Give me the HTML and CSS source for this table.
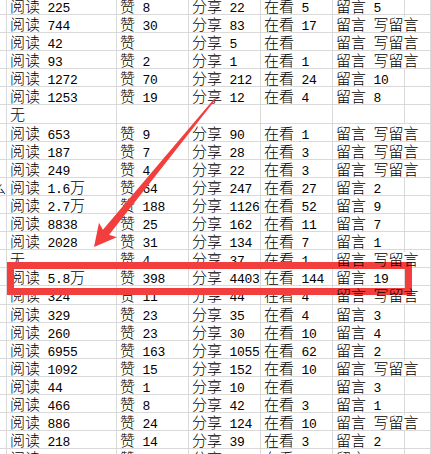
FILE: index.html
```html
<!DOCTYPE html>
<html lang="zh-CN">
<head>
<meta charset="utf-8">
<title>阅读数据</title>
<link rel="stylesheet" href="styles.css">
</head>
<body>
<div class="page">
  <div class="sheet">
    <div class="row"><div class="c a"></div><div class="c">阅读<span class="n"> 225</span></div><div class="c">赞<span class="n"> 8</span></div><div class="c">分享<span class="n"> 22</span></div><div class="c">在看<span class="n"> 5</span></div><div class="c">留言<span class="n"> 5</span></div><div class="c"></div></div>
    <div class="row"><div class="c a"></div><div class="c">阅读<span class="n"> 744</span></div><div class="c">赞<span class="n"> 30</span></div><div class="c">分享<span class="n"> 83</span></div><div class="c">在看<span class="n"> 17</span></div><div class="c ov">留言<span class="n"> </span>写留言</div><div class="c"></div></div>
    <div class="row"><div class="c a"></div><div class="c">阅读<span class="n"> 42</span></div><div class="c">赞</div><div class="c">分享<span class="n"> 5</span></div><div class="c">在看</div><div class="c ov">留言<span class="n"> </span>写留言</div><div class="c"></div></div>
    <div class="row"><div class="c a"></div><div class="c">阅读<span class="n"> 93</span></div><div class="c">赞<span class="n"> 2</span></div><div class="c">分享<span class="n"> 1</span></div><div class="c">在看<span class="n"> 1</span></div><div class="c ov">留言<span class="n"> </span>写留言</div><div class="c"></div></div>
    <div class="row"><div class="c a"></div><div class="c">阅读<span class="n"> 1272</span></div><div class="c">赞<span class="n"> 70</span></div><div class="c">分享<span class="n"> 212</span></div><div class="c">在看<span class="n"> 24</span></div><div class="c">留言<span class="n"> 10</span></div><div class="c"></div></div>
    <div class="row"><div class="c a"></div><div class="c">阅读<span class="n"> 1253</span></div><div class="c">赞<span class="n"> 19</span></div><div class="c">分享<span class="n"> 12</span></div><div class="c">在看<span class="n"> 4</span></div><div class="c">留言<span class="n"> 8</span></div><div class="c"></div></div>
    <div class="row"><div class="c a"></div><div class="c">无</div><div class="c"></div><div class="c"></div><div class="c"></div><div class="c"></div><div class="c"></div></div>
    <div class="row"><div class="c a"></div><div class="c">阅读<span class="n"> 653</span></div><div class="c">赞<span class="n"> 9</span></div><div class="c">分享<span class="n"> 90</span></div><div class="c">在看<span class="n"> 1</span></div><div class="c ov">留言<span class="n"> </span>写留言</div><div class="c"></div></div>
    <div class="row"><div class="c a"></div><div class="c">阅读<span class="n"> 187</span></div><div class="c">赞<span class="n"> 7</span></div><div class="c">分享<span class="n"> 28</span></div><div class="c">在看<span class="n"> 3</span></div><div class="c ov">留言<span class="n"> </span>写留言</div><div class="c"></div></div>
    <div class="row"><div class="c a"></div><div class="c">阅读<span class="n"> 249</span></div><div class="c">赞<span class="n"> 4</span></div><div class="c">分享<span class="n"> 22</span></div><div class="c">在看<span class="n"> 3</span></div><div class="c ov">留言<span class="n"> </span>写留言</div><div class="c"></div></div>
    <div class="row"><div class="c a"><span>么</span></div><div class="c">阅读<span class="n"> 1.6</span>万</div><div class="c">赞<span class="n"> 64</span></div><div class="c">分享<span class="n"> 247</span></div><div class="c">在看<span class="n"> 27</span></div><div class="c">留言<span class="n"> 2</span></div><div class="c"></div></div>
    <div class="row"><div class="c a"></div><div class="c">阅读<span class="n"> 2.7</span>万</div><div class="c">赞<span class="n"> 188</span></div><div class="c">分享<span class="n"> 1126</span></div><div class="c">在看<span class="n"> 52</span></div><div class="c">留言<span class="n"> 9</span></div><div class="c"></div></div>
    <div class="row"><div class="c a"></div><div class="c">阅读<span class="n"> 8838</span></div><div class="c">赞<span class="n"> 25</span></div><div class="c">分享<span class="n"> 162</span></div><div class="c">在看<span class="n"> 11</span></div><div class="c">留言<span class="n"> 7</span></div><div class="c"></div></div>
    <div class="row"><div class="c a"></div><div class="c">阅读<span class="n"> 2028</span></div><div class="c">赞<span class="n"> 31</span></div><div class="c">分享<span class="n"> 134</span></div><div class="c">在看<span class="n"> 7</span></div><div class="c">留言<span class="n"> 1</span></div><div class="c"></div></div>
    <div class="row"><div class="c a"></div><div class="c">无</div><div class="c">赞<span class="n"> 4</span></div><div class="c">分享<span class="n"> 37</span></div><div class="c">在看<span class="n"> 1</span></div><div class="c ov">留言<span class="n"> </span>写留言</div><div class="c"></div></div>
    <div class="row"><div class="c a"></div><div class="c">阅读<span class="n"> 5.8</span>万</div><div class="c">赞<span class="n"> 398</span></div><div class="c">分享<span class="n"> 4403</span></div><div class="c">在看<span class="n"> 144</span></div><div class="c">留言<span class="n"> 19</span></div><div class="c"></div></div>
    <div class="row"><div class="c a"></div><div class="c">阅读<span class="n"> 324</span></div><div class="c">赞<span class="n"> 11</span></div><div class="c">分享<span class="n"> 44</span></div><div class="c">在看<span class="n"> 4</span></div><div class="c ov">留言<span class="n"> </span>写留言</div><div class="c"></div></div>
    <div class="row"><div class="c a"></div><div class="c">阅读<span class="n"> 329</span></div><div class="c">赞<span class="n"> 23</span></div><div class="c">分享<span class="n"> 35</span></div><div class="c">在看<span class="n"> 4</span></div><div class="c">留言<span class="n"> 3</span></div><div class="c"></div></div>
    <div class="row"><div class="c a"></div><div class="c">阅读<span class="n"> 260</span></div><div class="c">赞<span class="n"> 23</span></div><div class="c">分享<span class="n"> 30</span></div><div class="c">在看<span class="n"> 10</span></div><div class="c">留言<span class="n"> 4</span></div><div class="c"></div></div>
    <div class="row"><div class="c a"></div><div class="c">阅读<span class="n"> 6955</span></div><div class="c">赞<span class="n"> 163</span></div><div class="c">分享<span class="n"> 1055</span></div><div class="c">在看<span class="n"> 62</span></div><div class="c">留言<span class="n"> 2</span></div><div class="c"></div></div>
    <div class="row"><div class="c a"></div><div class="c">阅读<span class="n"> 1092</span></div><div class="c">赞<span class="n"> 15</span></div><div class="c">分享<span class="n"> 152</span></div><div class="c">在看<span class="n"> 10</span></div><div class="c ov">留言<span class="n"> </span>写留言</div><div class="c"></div></div>
    <div class="row"><div class="c a"></div><div class="c">阅读<span class="n"> 44</span></div><div class="c">赞<span class="n"> 1</span></div><div class="c">分享<span class="n"> 10</span></div><div class="c">在看</div><div class="c">留言<span class="n"> 3</span></div><div class="c"></div></div>
    <div class="row"><div class="c a"></div><div class="c">阅读<span class="n"> 466</span></div><div class="c">赞<span class="n"> 8</span></div><div class="c">分享<span class="n"> 42</span></div><div class="c">在看<span class="n"> 3</span></div><div class="c">留言<span class="n"> 1</span></div><div class="c"></div></div>
    <div class="row"><div class="c a"></div><div class="c">阅读<span class="n"> 886</span></div><div class="c">赞<span class="n"> 24</span></div><div class="c">分享<span class="n"> 124</span></div><div class="c">在看<span class="n"> 10</span></div><div class="c ov">留言<span class="n"> </span>写留言</div><div class="c"></div></div>
    <div class="row"><div class="c a"></div><div class="c">阅读<span class="n"> 218</span></div><div class="c">赞<span class="n"> 14</span></div><div class="c">分享<span class="n"> 39</span></div><div class="c">在看<span class="n"> 3</span></div><div class="c">留言<span class="n"> 2</span></div><div class="c"></div></div>
    <div class="row"><div class="c a"></div><div class="c">阅读<span class="n"> 1515</span></div><div class="c">赞<span class="n"> 54</span></div><div class="c">分享<span class="n"> 213</span></div><div class="c">在看<span class="n"> 23</span></div><div class="c">留言<span class="n"> 11</span></div><div class="c"></div></div>
  </div>

  <div class="highlight"></div>
  <svg class="arrow" width="431" height="454" viewBox="0 0 431 454" aria-hidden="true">
    <polygon points="94,247 116.8,237.3 109.1,234.8 215.6,99.5 214.4,98.5 102.9,229.8 99,222.7"/>
  </svg>
</div>
</body>
</html>
```
FILE: styles.css
```css
html, body {
  margin: 0;
  padding: 0;
  background: #ffffff;
}

.page {
  position: relative;
  width: 431px;
  height: 454px;
  overflow: hidden;
  background: #ffffff;
}

.sheet {
  margin-top: -3.1px;
}

.row {
  display: grid;
  grid-template-columns: 7px 110px 72px 72px 72px 72px 1fr;
  height: 18.1px;
  box-sizing: border-box;
  border-bottom: 1px solid #d9d9d9;
}

.c {
  box-sizing: border-box;
  border-right: 1px solid #d9d9d9;
  padding-left: 3px;
  white-space: pre;
  font-family: "Noto Sans CJK SC", sans-serif;
  font-weight: 300;
  font-size: 15px;
  line-height: 17px;
  color: #000000;
  overflow: visible;
  position: relative;
  z-index: 0;
}

.c.a {
  padding-left: 0;
  overflow: hidden;
  display: flex;
  justify-content: flex-end;
}

.c.ov {
  border-right-color: transparent;
  z-index: 1;
}

.n {
  font-family: "Liberation Mono", monospace;
  font-weight: 400;
  font-size: 13px;
  letter-spacing: -0.3px;
}

.highlight {
  position: absolute;
  left: 7px;
  top: 262px;
  width: 405px;
  height: 33px;
  box-sizing: border-box;
  border: 7px solid #f33e3e;
}

.arrow {
  position: absolute;
  left: 0;
  top: 0;
}

.arrow polygon {
  fill: #f33e3e;
}
```
